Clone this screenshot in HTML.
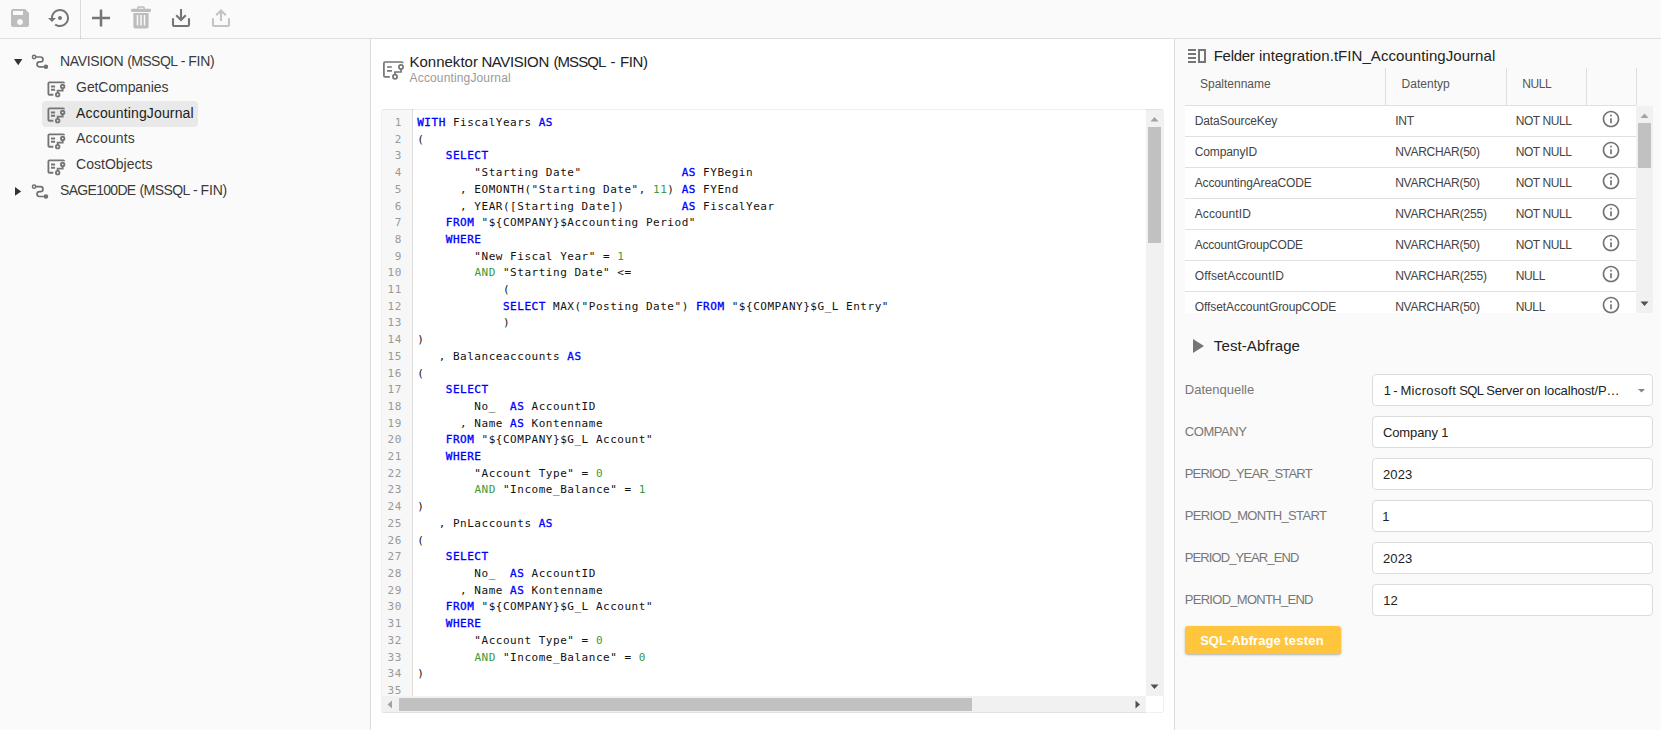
<!DOCTYPE html>
<html lang="de"><head><meta charset="utf-8"><title>Konnektor</title>
<style>
html,body{margin:0;padding:0}
body{width:1661px;height:730px;overflow:hidden;background:#fafafa;position:relative;font-family:"Liberation Sans",sans-serif}
.a{position:absolute}
.t{position:absolute;white-space:pre;line-height:normal;font-family:"Liberation Sans",sans-serif}
svg{position:absolute;overflow:visible}
#toolbar{left:0;top:0;width:1661px;height:38px;background:#fafafa;border-bottom:1px solid #dedede}
#tdiv{left:80px;top:0;width:1px;height:39px;background:rgba(0,0,0,.12)}
#left{left:0;top:39px;width:370px;height:691px;background:#fafafa;border-right:1px solid #dcdcdc}
#center{left:371px;top:39px;width:803px;height:691px;background:#fff}
#right{left:1174px;top:39px;width:487px;height:691px;background:#fafafa;border-left:1px solid #dcdcdc;box-sizing:border-box}
#sel{left:42px;top:101px;width:156px;height:26px;border-radius:4px;background:#e9e9e9}
#editor{left:381px;top:109px;width:783px;height:604px;background:#fff;border-radius:2.5px;overflow:hidden}
#edge{left:0;top:0;width:783px;height:604px;border-radius:2.5px;box-shadow:inset 0 0 0 1px rgba(0,0,0,.06);pointer-events:none}
#gutter{left:1px;top:0;width:30px;height:587px;background:#f7f7f7;border-right:1px solid #ddd}
#nums{left:1.9px;top:6.0px;width:19px;text-align:right;font-family:"DejaVu Sans Mono","Liberation Mono",monospace;font-size:11px;letter-spacing:0.525px;line-height:16.7px;color:#999;white-space:pre;margin:0}
#code{left:36.2px;top:6.0px;font-family:"DejaVu Sans Mono","Liberation Mono",monospace;font-size:11px;letter-spacing:0.525px;line-height:16.7px;color:#111;white-space:pre;margin:0}
#code b{color:#0000ff;font-weight:400;-webkit-text-stroke:0.34px #0000ff}
#code i{color:#3a9b3a;font-style:normal}
#vs{left:765px;top:0;width:17px;height:587px;background:#f1f1f1}
#vth{left:767px;top:18px;width:13px;height:116px;background:#c1c1c1}
#hs{left:1px;top:587px;width:764px;height:17px;background:#f1f1f1}
#hth{left:18px;top:589px;width:573px;height:13px;background:#c1c1c1}
#thead{left:1185px;top:68px;width:452px;height:37px}
.vsep{width:1px;top:68px;height:37px;background:#dedede}
#tbody{left:1185px;top:105px;width:451px;height:208px;background:#fff;overflow:hidden}
.rb{left:0;width:451px;height:1px;background:#e0e0e0}
#tvs{left:1636px;top:106px;width:17px;height:207px;background:#f1f1f1}
#tvth{left:1638px;top:123px;width:13px;height:45px;background:#c1c1c1}
.inp{left:1372px;width:281px;height:32px;box-sizing:border-box;border:1px solid #dcdcdc;border-radius:4px;background:#fff}
#btn{left:1185px;top:626px;width:156px;height:28px;border-radius:3px;background:#ffc53d;box-shadow:0 1px 3px rgba(0,0,0,.22),0 1px 1px rgba(0,0,0,.1)}

</style></head>
<body>
<div class="a" id="toolbar"></div>
<div class="a" id="tdiv"></div>
<div class="a" id="left"></div>
<div class="a" id="center"></div>
<div class="a" id="right"></div>
<div class="a" id="sel"></div>

<!-- toolbar icons -->
<svg style="left:8px;top:6px" width="24" height="24" viewBox="0 0 24 24"><path fill="#bdbdbd" d="M17 3H5c-1.11 0-2 .9-2 2v14c0 1.1.89 2 2 2h14c1.1 0 2-.9 2-2V7l-4-4zm-5 16c-1.66 0-3-1.34-3-3s1.34-3 3-3 3 1.34 3 3-1.34 3-3 3zm3-10H5V5h10v4z"/></svg>
<svg style="left:48px;top:6px" width="24" height="24" viewBox="0 0 24 24"><path fill="#757575" d="M14 12c0-1.1-.9-2-2-2s-2 .9-2 2 .9 2 2 2 2-.9 2-2zm-2-9c-4.97 0-9 4.03-9 9H0l4 4 4-4H5c0-3.87 3.13-7 7-7s7 3.13 7 7-3.13 7-7 7c-1.51 0-2.91-.49-4.06-1.3l-1.42 1.44C8.04 20.3 9.94 21 12 21c4.97 0 9-4.03 9-9s-4.03-9-9-9z"/></svg>
<svg style="left:92px;top:9px" width="18" height="18" viewBox="0 0 18 18"><path fill="none" stroke="#757575" stroke-width="2.5" d="M9 .4V17.600M0 9H18"/></svg>
<svg style="left:131px;top:6px" width="20" height="23" viewBox="0 0 20 23"><path fill="none" stroke="#bdbdbd" stroke-width="1.400" d="M6.800 3V2Q6.800 1 7.800 1H12.200Q13.200 1 13.200 2V3"/><rect x="0" y="2.800" width="20" height="3.100" rx="1.200" fill="#bdbdbd"/><path fill="#bdbdbd" d="M2.400 7h15.200v13.400q0 2.200-2.200 2.200H4.600q-2.200 0-2.200-2.200z"/><path stroke="#fafafa" stroke-width="1.500" d="M6.500 9v10.400M10 9v10.400M13.500 9v10.400"/></svg>
<svg style="left:169px;top:6px" width="24" height="24" viewBox="0 0 24 24"><path fill="none" stroke="#757575" stroke-width="2.1" d="M20 12.200v6.600a1.200 1.200 0 0 1-1.200 1.200H5.200A1.200 1.200 0 0 1 4 18.800V12.200M7.200 9.200 12 14.100 16.800 9.200M12 13.800V3"/></svg>
<svg style="left:209px;top:6px" width="24" height="24" viewBox="0 0 24 24"><path fill="none" stroke="#c4c4c4" stroke-width="2.1" d="M20 12.200v6.600a1.200 1.200 0 0 1-1.200 1.200H5.200A1.200 1.200 0 0 1 4 18.800V12.200M7.200 9.200 12 4.400 16.800 9.200M12 4.800V15"/></svg>

<!-- tree -->
<svg style="left:13.8px;top:58.9px" width="8.4" height="6.2" viewBox="0 0 8.4 6.2"><path fill="#333" d="M0 0H8.400L4.200 6.200z"/></svg>
<svg style="left:14.9px;top:186.6px" width="6.2" height="8.8" viewBox="0 0 6.2 8.800"><path fill="#333" d="M0 0V8.800L6.200 4.400z"/></svg>
<svg style="left:31.00px;top:54.00px" width="17" height="16" viewBox="0 0 17 16"><g transform="translate(0.8 0.5)"><circle cx="2.300" cy="2.500" r="1.650" fill="none" stroke="#707070" stroke-width="1.500"/><path fill="none" stroke="#707070" stroke-width="1.700" d="M4 2.500H8.700A2.450 2.450 0 0 1 8.700 7.400H7.700A2.450 2.450 0 0 0 7.700 12.300H12"/><circle cx="14.100" cy="12.300" r="2.300" fill="#707070"/></g></svg><svg style="left:31.00px;top:184.00px" width="17" height="16" viewBox="0 0 17 16"><g transform="translate(0.8 0.2)"><circle cx="2.300" cy="2.500" r="1.650" fill="none" stroke="#707070" stroke-width="1.500"/><path fill="none" stroke="#707070" stroke-width="1.700" d="M4 2.500H8.700A2.450 2.450 0 0 1 8.700 7.400H7.700A2.450 2.450 0 0 0 7.700 12.300H12"/><circle cx="14.100" cy="12.300" r="2.300" fill="#707070"/></g></svg>
<svg style="left:46.00px;top:79.00px" width="20" height="20" viewBox="0 0 24 24"><g fill="none" stroke="#757575" stroke-width="2.2"><path d="M21.800 5.200Q21.800 4 20.600 4H4.100Q2.900 4 2.900 5.200V17.700Q2.900 18.900 4.100 18.900H8.800"/><path d="M6 9H10.900M6 12.900H10.900"/><circle cx="20" cy="9" r="2.100"/><circle cx="14" cy="18.800" r="2.100"/><path d="M20 11.100V14H14V16.700"/></g></svg><svg style="left:46.00px;top:105.00px" width="20" height="20" viewBox="0 0 24 24"><g fill="none" stroke="#757575" stroke-width="2.2"><path d="M21.800 5.200Q21.800 4 20.600 4H4.100Q2.900 4 2.900 5.200V17.700Q2.900 18.900 4.100 18.900H8.800"/><path d="M6 9H10.900M6 12.900H10.900"/><circle cx="20" cy="9" r="2.100"/><circle cx="14" cy="18.800" r="2.100"/><path d="M20 11.100V14H14V16.700"/></g></svg><svg style="left:46.00px;top:131.00px" width="20" height="20" viewBox="0 0 24 24"><g fill="none" stroke="#757575" stroke-width="2.2"><path d="M21.800 5.200Q21.800 4 20.600 4H4.100Q2.900 4 2.900 5.200V17.700Q2.900 18.900 4.100 18.900H8.800"/><path d="M6 9H10.900M6 12.900H10.900"/><circle cx="20" cy="9" r="2.100"/><circle cx="14" cy="18.800" r="2.100"/><path d="M20 11.100V14H14V16.700"/></g></svg><svg style="left:46.00px;top:157.00px" width="20" height="20" viewBox="0 0 24 24"><g fill="none" stroke="#757575" stroke-width="2.2"><path d="M21.800 5.200Q21.800 4 20.600 4H4.100Q2.900 4 2.900 5.200V17.700Q2.900 18.900 4.100 18.900H8.800"/><path d="M6 9H10.900M6 12.900H10.900"/><circle cx="20" cy="9" r="2.100"/><circle cx="14" cy="18.800" r="2.100"/><path d="M20 11.100V14H14V16.700"/></g></svg>

<!-- center header icon -->
<svg style="left:381.00px;top:58.00px" width="24" height="24" viewBox="0 0 24 24"><g fill="none" stroke="#757575" stroke-width="1.7"><path d="M21.800 5.200Q21.800 4 20.600 4H4.100Q2.900 4 2.900 5.200V17.700Q2.900 18.900 4.100 18.900H8.800"/><path d="M6 9H10.900M6 12.900H10.900"/><circle cx="20" cy="9" r="2.100"/><circle cx="14" cy="18.800" r="2.100"/><path d="M20 11.100V14H14V16.700"/></g></svg>

<!-- editor -->
<div class="a" id="editor">
<div class="a" id="gutter"></div>
<pre class="a" id="nums">1
2
3
4
5
6
7
8
9
10
11
12
13
14
15
16
17
18
19
20
21
22
23
24
25
26
27
28
29
30
31
32
33
34
35</pre>
<pre class="a" id="code"><b>WITH</b> FiscalYears <b>AS</b>
(
    <b>SELECT</b>
        "Starting Date"              <b>AS</b> FYBegin
      , EOMONTH("Starting Date", <i>11</i>) <b>AS</b> FYEnd
      , YEAR([Starting Date])        <b>AS</b> FiscalYear
    <b>FROM</b> "${COMPANY}$Accounting Period"
    <b>WHERE</b>
        "New Fiscal Year" = <i>1</i>
        <i>AND</i> "Starting Date" &lt;=
            (
            <b>SELECT</b> MAX("Posting Date") <b>FROM</b> "${COMPANY}$G_L Entry"
            )
)
   , Balanceaccounts <b>AS</b>
(
    <b>SELECT</b>
        No_  <b>AS</b> AccountID
      , Name <b>AS</b> Kontenname
    <b>FROM</b> "${COMPANY}$G_L Account"
    <b>WHERE</b>
        "Account Type" = <i>0</i>
        <i>AND</i> "Income_Balance" = <i>1</i>
)
   , PnLaccounts <b>AS</b>
(
    <b>SELECT</b>
        No_  <b>AS</b> AccountID
      , Name <b>AS</b> Kontenname
    <b>FROM</b> "${COMPANY}$G_L Account"
    <b>WHERE</b>
        "Account Type" = <i>0</i>
        <i>AND</i> "Income_Balance" = <i>0</i>
)
</pre>
<div class="a" id="vs"></div><div class="a" id="vth"></div>
<div class="a" id="hs"></div><div class="a" id="hth"></div>
<svg style="left:1px;top:0" width="782" height="604" viewBox="0 0 782 604"><path fill="#a3a3a3" d="M768.500 12.500h8l-4-4.500zM10 591.500v8l-4.500-4z"/><path fill="#505050" d="M768.500 575.500h8l-4 4.500zM753.500 591.500v8l4.500-4z"/></svg>
<div class="a" id="edge"></div>
</div>

<!-- right: fields -->
<svg style="left:1188px;top:49px" width="18" height="14" viewBox="0 0 18 14"><path fill="#757575" d="M0 0h8v2H0zM0 4h8v2H0zM0 8h8v2H0zM0 12h8v2H0zM10 0h8v14h-8zM12 2v10h4V2z" fill-rule="evenodd"/></svg>
<div class="a vsep" style="left:1385px"></div>
<div class="a vsep" style="left:1506px"></div>
<div class="a vsep" style="left:1586px"></div>
<div class="a vsep" style="left:1636px"></div>
<div class="a" id="tbody">
<div class="a rb" style="top:0"></div><div class="a rb" style="top:31px"></div><div class="a rb" style="top:62px"></div><div class="a rb" style="top:93px"></div><div class="a rb" style="top:124px"></div><div class="a rb" style="top:155px"></div><div class="a rb" style="top:186px"></div>
</div>
<div class="a" id="tvs"></div><div class="a" id="tvth"></div>
<svg style="left:1636px;top:106px" width="17" height="207" viewBox="0 0 17 207"><path fill="#a3a3a3" d="M4.500 12h8l-4-4.500z"/><path fill="#505050" d="M4.500 195.500h8l-4 4.500z"/></svg>
<svg style="left:1601.00px;top:109.00px" width="20" height="20" viewBox="0 0 24 24"><path fill="#727272" d="M11 17h2v-6h-2v6zm1-15C6.480 2 2 6.480 2 12s4.480 10 10 10 10-4.480 10-10S17.520 2 12 2zm0 18c-4.410 0-8-3.590-8-8s3.590-8 8-8 8 3.590 8 8-3.590 8-8 8zM11 9h2V7h-2v2z"/></svg><svg style="left:1601.00px;top:140.00px" width="20" height="20" viewBox="0 0 24 24"><path fill="#727272" d="M11 17h2v-6h-2v6zm1-15C6.480 2 2 6.480 2 12s4.480 10 10 10 10-4.480 10-10S17.520 2 12 2zm0 18c-4.410 0-8-3.590-8-8s3.590-8 8-8 8 3.590 8 8-3.590 8-8 8zM11 9h2V7h-2v2z"/></svg><svg style="left:1601.00px;top:171.00px" width="20" height="20" viewBox="0 0 24 24"><path fill="#727272" d="M11 17h2v-6h-2v6zm1-15C6.480 2 2 6.480 2 12s4.480 10 10 10 10-4.480 10-10S17.520 2 12 2zm0 18c-4.410 0-8-3.590-8-8s3.590-8 8-8 8 3.590 8 8-3.590 8-8 8zM11 9h2V7h-2v2z"/></svg><svg style="left:1601.00px;top:202.00px" width="20" height="20" viewBox="0 0 24 24"><path fill="#727272" d="M11 17h2v-6h-2v6zm1-15C6.480 2 2 6.480 2 12s4.480 10 10 10 10-4.480 10-10S17.520 2 12 2zm0 18c-4.410 0-8-3.590-8-8s3.590-8 8-8 8 3.590 8 8-3.590 8-8 8zM11 9h2V7h-2v2z"/></svg><svg style="left:1601.00px;top:233.00px" width="20" height="20" viewBox="0 0 24 24"><path fill="#727272" d="M11 17h2v-6h-2v6zm1-15C6.480 2 2 6.480 2 12s4.480 10 10 10 10-4.480 10-10S17.520 2 12 2zm0 18c-4.410 0-8-3.590-8-8s3.590-8 8-8 8 3.590 8 8-3.590 8-8 8zM11 9h2V7h-2v2z"/></svg><svg style="left:1601.00px;top:264.00px" width="20" height="20" viewBox="0 0 24 24"><path fill="#727272" d="M11 17h2v-6h-2v6zm1-15C6.480 2 2 6.480 2 12s4.480 10 10 10 10-4.480 10-10S17.520 2 12 2zm0 18c-4.410 0-8-3.590-8-8s3.590-8 8-8 8 3.590 8 8-3.590 8-8 8zM11 9h2V7h-2v2z"/></svg><svg style="left:1601.00px;top:295.00px" width="20" height="20" viewBox="0 0 24 24"><path fill="#727272" d="M11 17h2v-6h-2v6zm1-15C6.480 2 2 6.480 2 12s4.480 10 10 10 10-4.480 10-10S17.520 2 12 2zm0 18c-4.410 0-8-3.590-8-8s3.590-8 8-8 8 3.590 8 8-3.590 8-8 8zM11 9h2V7h-2v2z"/></svg>

<!-- test query -->
<svg style="left:1185px;top:334px" width="24" height="24" viewBox="0 0 24 24"><path fill="#757575" d="M8 5v14l11-7z"/></svg>
<div class="a inp" style="top:374px"></div>
<div class="a inp" style="top:416px"></div>
<div class="a inp" style="top:458px"></div>
<div class="a inp" style="top:500px"></div>
<div class="a inp" style="top:542px"></div>
<div class="a inp" style="top:584px"></div>
<svg style="left:1637.600px;top:389px" width="7" height="3.5" viewBox="0 0 7 3.500"><path fill="#858585" d="M0 0h7L3.500 3.500z"/></svg>
<div class="a" id="btn"></div>

<span class="t" style="left:60.00px;top:53.10px;font-size:14px;color:#3a3a3a;letter-spacing:-0.332px">NAVISION</span>
<span class="t" style="left:127.20px;top:53.10px;font-size:14px;color:#3a3a3a;letter-spacing:-0.578px">(MSSQL</span>
<span class="t" style="left:180.70px;top:53.10px;font-size:14px;color:#3a3a3a;letter-spacing:0.000px">-</span>
<span class="t" style="left:188.30px;top:53.10px;font-size:14px;color:#3a3a3a;letter-spacing:-0.300px">FIN)</span>
<span class="t" style="left:76.10px;top:79.00px;font-size:14px;color:#3a3a3a;letter-spacing:-0.098px">GetCompanies</span>
<span class="t" style="left:76.10px;top:105.10px;font-size:14px;color:#1c1c1c;letter-spacing:0.149px">AccountingJournal</span>
<span class="t" style="left:76.10px;top:130.10px;font-size:14px;color:#3a3a3a;letter-spacing:0.166px">Accounts</span>
<span class="t" style="left:76.10px;top:156.10px;font-size:14px;color:#3a3a3a;letter-spacing:0.006px">CostObjects</span>
<span class="t" style="left:60.00px;top:181.80px;font-size:14px;color:#3a3a3a;letter-spacing:-0.689px">SAGE100DE</span>
<span class="t" style="left:139.50px;top:181.80px;font-size:14px;color:#3a3a3a;letter-spacing:-0.578px">(MSSQL</span>
<span class="t" style="left:192.90px;top:181.80px;font-size:14px;color:#3a3a3a;letter-spacing:0.000px">-</span>
<span class="t" style="left:200.60px;top:181.80px;font-size:14px;color:#3a3a3a;letter-spacing:-0.200px">FIN)</span>
<span class="t" style="left:409.45px;top:52.58px;font-size:15px;color:#222;letter-spacing:0.012px">Konnektor</span>
<span class="t" style="left:481.45px;top:52.58px;font-size:15px;color:#222;letter-spacing:-0.397px">NAVISION</span>
<span class="t" style="left:553.45px;top:52.58px;font-size:15px;color:#222;letter-spacing:-0.903px">(MSSQL</span>
<span class="t" style="left:610.55px;top:52.58px;font-size:15px;color:#222;letter-spacing:0.000px">-</span>
<span class="t" style="left:619.95px;top:52.58px;font-size:15px;color:#222;letter-spacing:-0.343px">FIN)</span>
<span class="t" style="left:409.60px;top:70.74px;font-size:12px;color:#9a9a9a;letter-spacing:0.143px">AccountingJournal</span>
<span class="t" style="left:1213.75px;top:46.98px;font-size:15px;color:#222;letter-spacing:-0.289px">Felder</span>
<span class="t" style="left:1258.95px;top:46.98px;font-size:15px;color:#222;letter-spacing:0.061px">integration.tFIN_AccountingJournal</span>
<span class="t" style="left:1200.10px;top:76.84px;font-size:12px;color:#555;letter-spacing:-0.024px">Spaltenname</span>
<span class="t" style="left:1401.60px;top:76.84px;font-size:12px;color:#555;letter-spacing:0.004px">Datentyp</span>
<span class="t" style="left:1522.20px;top:76.84px;font-size:12px;color:#555;letter-spacing:-0.357px">NULL</span>
<span class="t" style="left:1194.70px;top:113.54px;font-size:12px;color:#444;letter-spacing:-0.122px">DataSourceKey</span>
<span class="t" style="left:1395.20px;top:113.54px;font-size:12px;color:#444;letter-spacing:-0.228px">INT</span>
<span class="t" style="left:1515.70px;top:113.54px;font-size:12px;color:#444;letter-spacing:-0.423px">NOT NULL</span>
<span class="t" style="left:1194.70px;top:144.54px;font-size:12px;color:#444;letter-spacing:-0.100px">CompanyID</span>
<span class="t" style="left:1395.20px;top:144.54px;font-size:12px;color:#444;letter-spacing:-0.278px">NVARCHAR(50)</span>
<span class="t" style="left:1515.70px;top:144.54px;font-size:12px;color:#444;letter-spacing:-0.423px">NOT NULL</span>
<span class="t" style="left:1194.70px;top:175.54px;font-size:12px;color:#444;letter-spacing:-0.135px">AccountingAreaCODE</span>
<span class="t" style="left:1395.20px;top:175.54px;font-size:12px;color:#444;letter-spacing:-0.278px">NVARCHAR(50)</span>
<span class="t" style="left:1515.70px;top:175.54px;font-size:12px;color:#444;letter-spacing:-0.423px">NOT NULL</span>
<span class="t" style="left:1194.70px;top:206.54px;font-size:12px;color:#444;letter-spacing:0.100px">AccountID</span>
<span class="t" style="left:1395.20px;top:206.54px;font-size:12px;color:#444;letter-spacing:-0.231px">NVARCHAR(255)</span>
<span class="t" style="left:1515.70px;top:206.54px;font-size:12px;color:#444;letter-spacing:-0.423px">NOT NULL</span>
<span class="t" style="left:1194.70px;top:237.54px;font-size:12px;color:#444;letter-spacing:-0.196px">AccountGroupCODE</span>
<span class="t" style="left:1395.20px;top:237.54px;font-size:12px;color:#444;letter-spacing:-0.278px">NVARCHAR(50)</span>
<span class="t" style="left:1515.70px;top:237.54px;font-size:12px;color:#444;letter-spacing:-0.423px">NOT NULL</span>
<span class="t" style="left:1194.70px;top:268.54px;font-size:12px;color:#444;letter-spacing:0.140px">OffsetAccountID</span>
<span class="t" style="left:1395.20px;top:268.54px;font-size:12px;color:#444;letter-spacing:-0.231px">NVARCHAR(255)</span>
<span class="t" style="left:1515.70px;top:268.54px;font-size:12px;color:#444;letter-spacing:-0.332px">NULL</span>
<span class="t" style="left:1194.70px;top:299.54px;font-size:12px;color:#444;letter-spacing:-0.074px">OffsetAccountGroupCODE</span>
<span class="t" style="left:1395.20px;top:299.54px;font-size:12px;color:#444;letter-spacing:-0.278px">NVARCHAR(50)</span>
<span class="t" style="left:1515.70px;top:299.54px;font-size:12px;color:#444;letter-spacing:-0.332px">NULL</span>
<span class="t" style="left:1213.85px;top:336.98px;font-size:15px;color:#222;letter-spacing:0.096px">Test-Abfrage</span>
<span class="t" style="left:1184.75px;top:381.92px;font-size:13px;color:#777;letter-spacing:0.004px">Datenquelle</span>
<span class="t" style="left:1383.65px;top:383.12px;font-size:13px;color:#222;letter-spacing:0.000px">1</span>
<span class="t" style="left:1393.25px;top:383.12px;font-size:13px;color:#222;letter-spacing:0.000px">-</span>
<span class="t" style="left:1400.45px;top:383.12px;font-size:13px;color:#222;letter-spacing:0.345px">Microsoft</span>
<span class="t" style="left:1459.15px;top:383.12px;font-size:13px;color:#222;letter-spacing:-0.625px">SQL</span>
<span class="t" style="left:1486.15px;top:383.12px;font-size:13px;color:#222;letter-spacing:-0.176px">Server</span>
<span class="t" style="left:1526.05px;top:383.12px;font-size:13px;color:#222;letter-spacing:0.036px">on</span>
<span class="t" style="left:1544.25px;top:383.12px;font-size:13px;color:#222;letter-spacing:-0.113px">localhost/P…</span>
<span class="t" style="left:1184.75px;top:423.92px;font-size:13px;color:#777;letter-spacing:-0.432px">COMPANY</span>
<span class="t" style="left:1382.95px;top:425.12px;font-size:13px;color:#222;letter-spacing:-0.105px">Company 1</span>
<span class="t" style="left:1184.75px;top:465.92px;font-size:13px;color:#777;letter-spacing:-0.829px">PERIOD_YEAR_START</span>
<span class="t" style="left:1382.95px;top:467.12px;font-size:13px;color:#222;letter-spacing:0.130px">2023</span>
<span class="t" style="left:1184.75px;top:507.92px;font-size:13px;color:#777;letter-spacing:-0.663px">PERIOD_MONTH_START</span>
<span class="t" style="left:1382.35px;top:509.12px;font-size:13px;color:#222;letter-spacing:0.000px">1</span>
<span class="t" style="left:1184.75px;top:549.92px;font-size:13px;color:#777;letter-spacing:-0.901px">PERIOD_YEAR_END</span>
<span class="t" style="left:1382.95px;top:551.12px;font-size:13px;color:#222;letter-spacing:0.130px">2023</span>
<span class="t" style="left:1184.75px;top:591.92px;font-size:13px;color:#777;letter-spacing:-0.711px">PERIOD_MONTH_END</span>
<span class="t" style="left:1383.35px;top:593.12px;font-size:13px;color:#222;letter-spacing:0.036px">12</span>
<span class="t" style="left:1200.15px;top:632.62px;font-size:13px;color:#fff;letter-spacing:0.033px;font-weight:700">SQL-Abfrage</span>
<span class="t" style="left:1284.15px;top:632.62px;font-size:13px;color:#fff;letter-spacing:0.241px;font-weight:700">testen</span>

</body></html>
